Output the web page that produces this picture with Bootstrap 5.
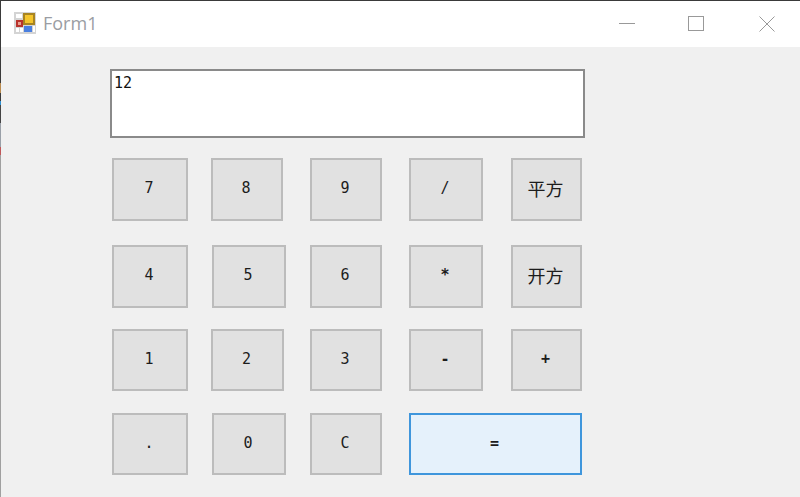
<!DOCTYPE html>
<html lang="en">
<head>
    <meta charset="UTF-8">
    <meta name="viewport" content="width=device-width, initial-scale=1.0">
    <title>Form1</title>
    <link href="https://cdn.jsdelivr.net/npm/bootstrap@5.3.0/dist/css/bootstrap.min.css" rel="stylesheet">
    <style>
        html, body { height: 100%; overflow: hidden; }
        body { background: #f0f0f0; }

        .win-frame { height: 497px; border-top: 1px solid #3a3a3a; }
        .win-edge {
            width: 1px;
            background: linear-gradient(#3a3a3a 0 82px, #b98a4e 82px 92px, #3a3a3a 92px 100px, #2f8fd0 100px 104px, #444 104px 122px, #9aa0a8 122px 146px, #c0585a 146px 154px, #a0a0a0 154px);
        }
        .win-body { min-width: 0; }

        .title-strip { height: 46px; background: #fff; }
        .title-icon { margin-left: 13px; margin-bottom: 2px; }
        .title-text {
            margin-left: 7px;
            margin-bottom: 3px;
            font: 18px "Open Sans", "Liberation Sans", sans-serif;
            color: #9a9da3;
        }
        .ctl-row { gap: 53px; padding-right: 25px; }
        .ctl-close { margin-left: 2px; }

        .calc-area { padding: 22px 0 0 109px; }
        .calc-display {
            display: block;
            width: 475px;
            height: 69px;
            padding: 3px 2px;
            border: 2px solid #8a8a8a;
            border-radius: 0;
            background: #fff;
            color: #111;
            font: 15px/18px "DejaVu Sans Mono", "Liberation Mono", monospace;
            resize: none;
            outline: none;
        }
        .calc-grid {
            display: grid;
            grid-template-columns: 99px 99px 99px 102px 71px;
            grid-template-rows: 87px 84px 84px 62px;
            margin: 20px 0 0 2px;
        }
        .calc-key {
            height: 62px;
            padding: 0 2px 3px 0;
            border: 2px solid #bcbcbc;
            border-radius: 0;
            background: #e1e1e1;
            color: #1c1c1c;
            font: 15px "DejaVu Sans Mono", "Liberation Mono", monospace;
        }
        .key-tall { height: 63px; }
        .key-76 { width: 76px; }
        .key-72 { width: 72px; }
        .key-73 { width: 73px; }
        .key-74 { width: 74px; }
        .key-71 { width: 71px; }
        .key-shift { margin-left: 1px; }
        .key-cjk { font: 18px "Noto Sans CJK SC", sans-serif; }
        .key-op { font-weight: 700; }
        .key-eq {
            grid-column: span 2;
            width: 173px;
            border-color: #3f96dc;
            background: #e5f1fb;
        }
    </style>
</head>
<body>
    <div class="win-frame d-flex">
        <div class="win-edge flex-shrink-0"></div>
        <div class="win-body flex-grow-1">
            <!-- title bar -->
            <div class="title-strip d-flex align-items-center">
                <svg class="title-icon" width="22" height="22" viewBox="0 0 22 22">
                    <rect width="22" height="22" fill="#d4d4d4"/>
                    <rect x="2" y="2" width="6" height="4" fill="#fff"/>
                    <rect x="2" y="8" width="7" height="7" fill="#b8322c"/>
                    <rect x="4" y="10" width="3" height="3" fill="#e8a090"/>
                    <rect x="9" y="1" width="12" height="12" fill="#a88420"/>
                    <rect x="11" y="3" width="8" height="8" fill="#f5c52c"/>
                    <rect x="10" y="14" width="8" height="6" fill="#4a7fe0"/>
                    <rect x="2" y="16" width="3" height="4" fill="#fff"/>
                    <rect x="6" y="16" width="3" height="4" fill="#fff"/>
                    <rect x="19" y="14" width="2" height="6" fill="#fff"/>
                </svg>
                <span class="title-text">Form1</span>
                <div class="ctl-row ms-auto d-flex">
                    <svg width="16" height="16" viewBox="0 0 16 16"><path d="M0 7.5H16" stroke="#999" fill="none"/></svg>
                    <svg width="16" height="16" viewBox="0 0 16 16"><rect x="0.5" y="0.5" width="15" height="14" stroke="#999" fill="none"/></svg>
                    <svg class="ctl-close" width="16" height="16" viewBox="0 0 16 16"><path d="M0.5 0.5L15.5 15.5M15.5 0.5L0.5 15.5" stroke="#999" fill="none"/></svg>
                </div>
            </div>

            <!-- calculator -->
            <div class="calc-area">
                <textarea class="calc-display" readonly>12</textarea>
                <div class="calc-grid">
                    <div><button type="button" class="calc-key key-tall key-76">7</button></div>
                    <div><button type="button" class="calc-key key-tall key-72">8</button></div>
                    <div><button type="button" class="calc-key key-tall key-72">9</button></div>
                    <div><button type="button" class="calc-key key-tall key-74">/</button></div>
                    <div><button type="button" class="calc-key key-tall key-71 key-cjk">平方</button></div>

                    <div><button type="button" class="calc-key key-tall key-76">4</button></div>
                    <div><button type="button" class="calc-key key-tall key-74 key-shift">5</button></div>
                    <div><button type="button" class="calc-key key-tall key-72">6</button></div>
                    <div><button type="button" class="calc-key key-tall key-74 key-op">*</button></div>
                    <div><button type="button" class="calc-key key-tall key-71 key-cjk">开方</button></div>

                    <div><button type="button" class="calc-key key-76">1</button></div>
                    <div><button type="button" class="calc-key key-73">2</button></div>
                    <div><button type="button" class="calc-key key-72">3</button></div>
                    <div><button type="button" class="calc-key key-74 key-op">-</button></div>
                    <div><button type="button" class="calc-key key-71 key-op">+</button></div>

                    <div><button type="button" class="calc-key key-76">.</button></div>
                    <div><button type="button" class="calc-key key-74 key-shift">0</button></div>
                    <div><button type="button" class="calc-key key-72">C</button></div>
                    <button type="button" class="calc-key key-eq key-op">=</button>
                </div>
            </div>
        </div>
    </div>
    <script src="https://cdn.jsdelivr.net/npm/bootstrap@5.3.0/dist/js/bootstrap.bundle.min.js"></script>
</body>
</html>
